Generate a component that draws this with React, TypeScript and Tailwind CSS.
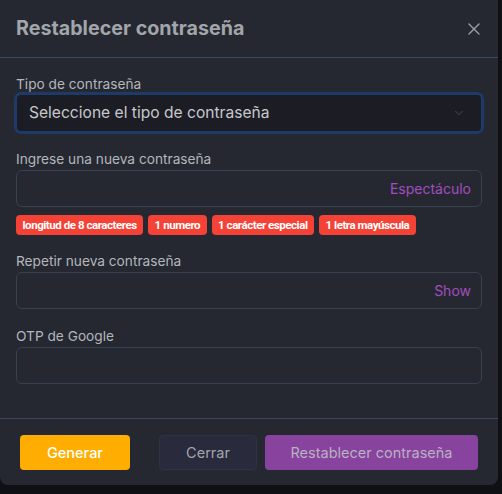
import { X, ChevronDown } from "lucide-react";

const rules = ["longitud de 8 caracteres", "1 numero", "1 carácter especial", "1 letra mayúscula"];

function Field({ label, action }: { label: string; action?: string }) {
  return (
    <div className="flex flex-col gap-[3px]">
      <label className="text-[13.7px] leading-[16px] text-[#b3b6bb]">{label}</label>
      <div className="flex h-[37px] items-center justify-end rounded-[6px] border border-[#364152] bg-[#252831] px-[10px]">
        {action && <span className="text-[14px] text-[#a34dc0]">{action}</span>}
      </div>
    </div>
  );
}

export default function App() {
  return (
    <div
      className="min-h-[494px] w-[502px] bg-[#0f1014]"
      style={{ fontFamily: "Inter, 'Noto Sans', sans-serif" }}
    >
      <div className="w-[498px] overflow-hidden rounded-b-[8px] bg-[#252831]">
        <div className="flex h-[58px] items-center justify-between border-b border-[#3a4a5c] px-[16px]">
          <h2 className="text-[19.7px] font-bold text-[#a2a5aa]">Restablecer contraseña</h2>
          <X size={20} strokeWidth={1.6} className="mr-[-2px] text-[#9a9da2]" />
        </div>

        <div className="flex flex-col px-[16px] pt-[18px] pb-[34px]">
          <div className="flex flex-col">
            <label className="text-[13.7px] leading-[16px] text-[#b3b6bb]">Tipo de contraseña</label>
            <div className="-mx-[2px] flex h-[42px] items-center justify-between rounded-[7px] border-[3px] border-[#1d3a68] bg-[#1c1d24] pl-[12px] pr-[15px]">
              <span className="text-[15.6px] text-[#c6c8cc]">Seleccione el tipo de contraseña</span>
              <ChevronDown size={14} strokeWidth={1.5} className="text-[#4a4d55]" />
            </div>
          </div>

          <div className="mt-[17px] flex flex-col gap-[8px]">
            <Field label="Ingrese una nueva contraseña" action="Espectáculo" />
            <div className="flex gap-[5px]" style={{ fontFamily: "Roboto, sans-serif" }}>
              {rules.map((r) => (
                <span
                  key={r}
                  className="rounded-[4px] bg-[#f44336] px-[6.5px] py-[3px] text-[11.5px] font-bold leading-[14px] tracking-[-0.45px] text-white"
                >
                  {r}
                </span>
              ))}
            </div>
          </div>

          <div className="mt-[18px]">
            <Field label="Repetir nueva contraseña" action="Show" />
          </div>

          <div className="mt-[19px]">
            <Field label="OTP de Google" />
          </div>
        </div>

        <div className="flex items-center gap-[8px] border-t border-[#3a4a5c] px-[20px] pt-[16px] pb-[15px]">
          <button className="h-[35px] w-[110px] rounded-[4px] bg-[#ffad00] text-[14.5px] font-medium text-white">
            Generar
          </button>
          <button className="ml-[21px] h-[35px] w-[98px] rounded-[4px] border border-[#2f3144] bg-[#292a3b] text-[14.5px] text-[#a3a5ad]">
            Cerrar
          </button>
          <button className="h-[35px] w-[213px] rounded-[4px] bg-[#88439e] text-[14.5px] text-[#b8b2c2]">
            Restablecer contraseña
          </button>
        </div>
      </div>
    </div>
  );
}
